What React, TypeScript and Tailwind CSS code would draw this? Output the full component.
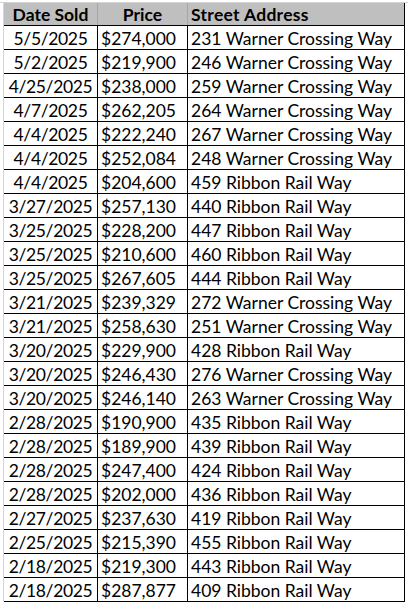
import React from "react";

const rows: [string, string, string][] = [
  ["5/5/2025", "$274,000", "231 Warner Crossing Way"],
  ["5/2/2025", "$219,900", "246 Warner Crossing Way"],
  ["4/25/2025", "$238,000", "259 Warner Crossing Way"],
  ["4/7/2025", "$262,205", "264 Warner Crossing Way"],
  ["4/4/2025", "$222,240", "267 Warner Crossing Way"],
  ["4/4/2025", "$252,084", "248 Warner Crossing Way"],
  ["4/4/2025", "$204,600", "459 Ribbon Rail Way"],
  ["3/27/2025", "$257,130", "440 Ribbon Rail Way"],
  ["3/25/2025", "$228,200", "447 Ribbon Rail Way"],
  ["3/25/2025", "$210,600", "460 Ribbon Rail Way"],
  ["3/25/2025", "$267,605", "444 Ribbon Rail Way"],
  ["3/21/2025", "$239,329", "272 Warner Crossing Way"],
  ["3/21/2025", "$258,630", "251 Warner Crossing Way"],
  ["3/20/2025", "$229,900", "428 Ribbon Rail Way"],
  ["3/20/2025", "$246,430", "276 Warner Crossing Way"],
  ["3/20/2025", "$246,140", "263 Warner Crossing Way"],
  ["2/28/2025", "$190,900", "435 Ribbon Rail Way"],
  ["2/28/2025", "$189,900", "439 Ribbon Rail Way"],
  ["2/28/2025", "$247,400", "424 Ribbon Rail Way"],
  ["2/28/2025", "$202,000", "436 Ribbon Rail Way"],
  ["2/27/2025", "$237,630", "419 Ribbon Rail Way"],
  ["2/25/2025", "$215,390", "455 Ribbon Rail Way"],
  ["2/18/2025", "$219,300", "443 Ribbon Rail Way"],
  ["2/18/2025", "$287,877", "409 Ribbon Rail Way"],
];

export default function App() {
  return (
    <div className="w-[408px] h-[607px] bg-white overflow-hidden font-['Lato',sans-serif] text-[17.5px] text-black">
      <div className="pt-[2px]">
        <div className="border-t border-[#d4d4d4] pl-[3px]">
          <div className="w-[402px] border-l border-[#d4d4d4]">
            <div className="flex h-[23px] border-b border-black bg-[#bfbfbf] font-bold leading-[21px]">
              <div className="w-[94px] border-r border-[#a6a6a6] text-center pt-[1px]">Date Sold</div>
              <div className="w-[90px] border-r border-[#a6a6a6] text-center pt-[1px]">Price</div>
              <div className="w-[217px] border-r border-black pl-[3px] pt-[1px] tracking-[0.3px]">Street Address</div>
            </div>
            {rows.map((r, i) => (
              <div key={i} className="flex h-[24px] border-b border-black leading-[21px]">
                <div className="w-[94px] border-r border-black text-center pt-[2px] tracking-[-0.35px]">{r[0]}</div>
                <div className="w-[90px] border-r border-black pl-[3px] pt-[2px]">{r[1]}</div>
                <div className="w-[217px] border-r border-black pl-[3px] pt-[2px]">{r[2]}</div>
              </div>
            ))}
          </div>
        </div>
      </div>
    </div>
  );
}
